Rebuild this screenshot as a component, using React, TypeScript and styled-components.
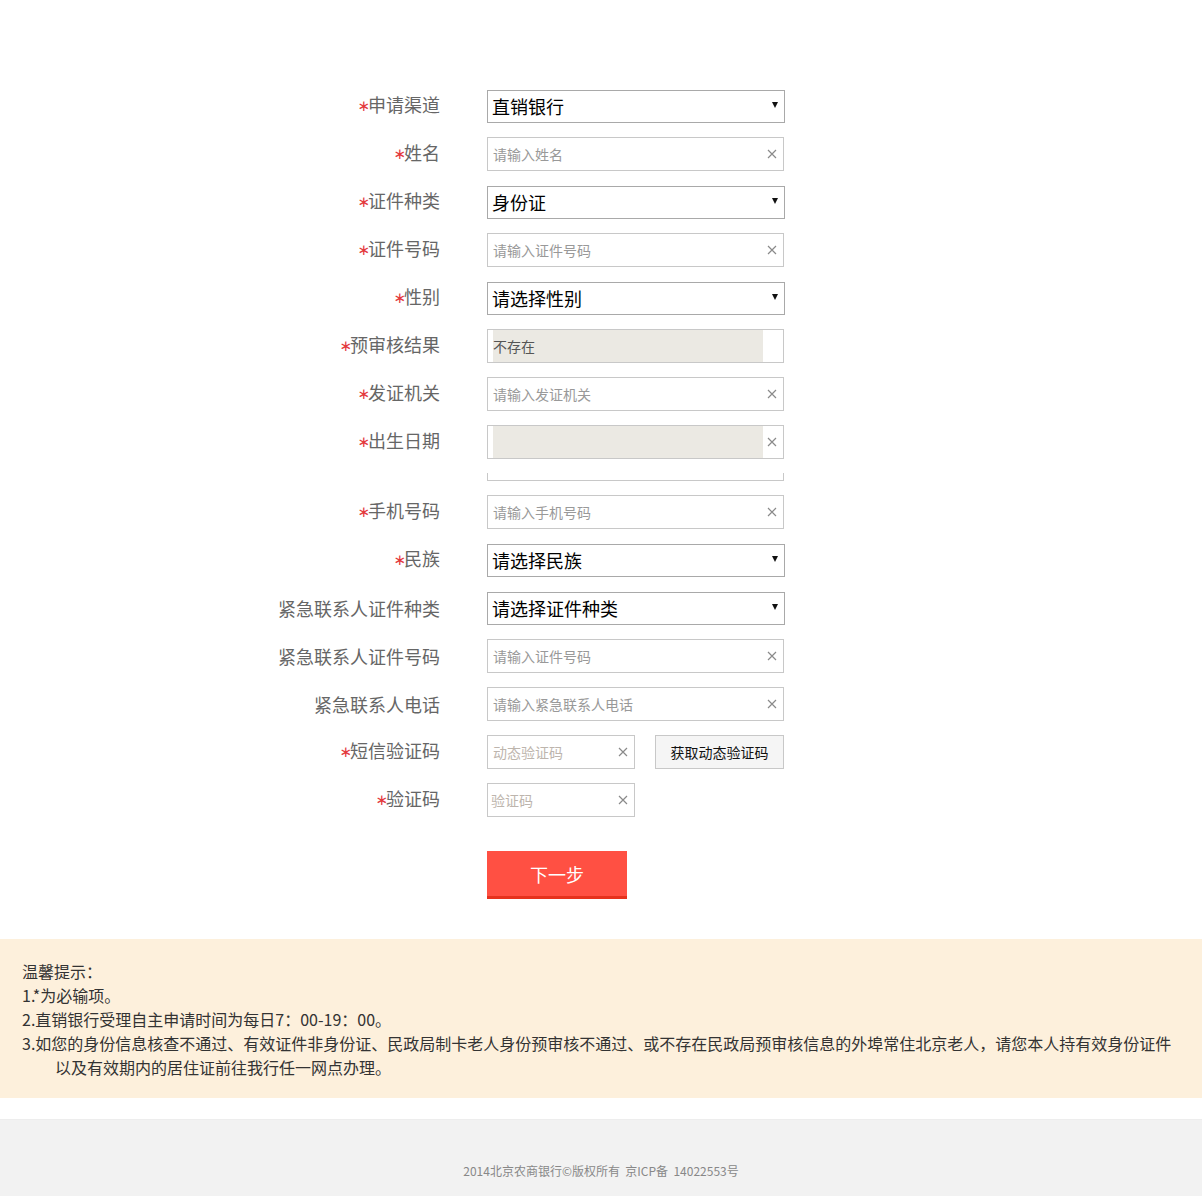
import * as React from 'react';
import styled, { createGlobalStyle } from 'styled-components';

const GlobalStyle = createGlobalStyle`
    html, body {
        margin: 0;
        padding: 0;
        background: #fff;
        font-family: "Noto Sans CJK SC", "Noto Sans", sans-serif;
    }
`;

const Page = styled.div`
    width: 1202px;
    min-height: 1196px;
    display: flex;
    flex-direction: column;
`;

const Form = styled.div`
    padding-top: 89px;
    display: flex;
    flex-direction: column;
`;

const Row = styled.div`
    display: grid;
    grid-template-columns: 440px auto;
    column-gap: 47px;
    align-items: center;
    height: 34px;
    margin-bottom: 14px;
`;

const ClippedRow = styled(Row)`
    height: 8px;
`;

const ClippedField = styled.div`
    height: 8px;
    overflow: hidden;
    display: flex;
    align-items: flex-end;
`;

const Label = styled.div`
    text-align: right;
    font-size: 18px;
    line-height: 24px;
    margin-top: -1px;
    color: #666;
    white-space: nowrap;
`;

const Star = styled.span`
    color: #e4393c;
    font-family: "DejaVu Sans", sans-serif;
    font-size: 15px;
    position: relative;
    top: -1px;
    margin-right: -2px;
`;

const Fields = styled.div`
    display: flex;
    align-items: center;
    gap: 20px;
`;

const SelectBox = styled.div`
    box-sizing: border-box;
    width: 298px;
    height: 33px;
    border: 1px solid #a9a9a9;
    display: flex;
    align-items: center;
    justify-content: space-between;
    padding: 0 6px 0 4px;
    font-size: 18px;
    color: #000;
    background: #fff;
    &::after {
        content: '';
        width: 0;
        height: 0;
        border-left: 3px solid transparent;
        border-right: 3px solid transparent;
        border-top: 6px solid #111;
        margin-top: -2px;
    }
`;

const TextField = styled.div<{ $short?: boolean }>`
    box-sizing: border-box;
    width: ${(p) => (p.$short ? '148px' : '297px')};
    height: 34px;
    border: 1px solid #c8c8c8;
    display: flex;
    align-items: center;
    padding: 0 6px 0 5px;
    background: #fff;
`;

const Input = styled.input<{ $light?: boolean }>`
    flex: 1;
    min-width: 0;
    border: none;
    outline: none;
    padding: 0;
    background: transparent;
    font-family: inherit;
    font-size: 14px;
    color: #333;
    &::placeholder {
        color: ${(p) => (p.$light ? '#bdb5ad' : '#999')};
    }
`;

const Filled = styled.div`
    align-self: stretch;
    width: 270px;
    background: #ebe9e3;
    display: flex;
    align-items: center;
    font-size: 14px;
    color: #555;
`;

const Spacer = styled.div`
    flex: 1;
`;

const CodeButton = styled.button`
    box-sizing: border-box;
    width: 129px;
    height: 34px;
    border: 1px solid #c8c8c8;
    background: #f5f5f5;
    font-family: inherit;
    font-size: 14px;
    color: #111;
    padding: 0;
    cursor: pointer;
`;

const NextButton = styled.button`
    box-sizing: border-box;
    margin: 20px 0 0 487px;
    width: 140px;
    height: 48px;
    border: none;
    border-bottom: 3px solid #e6321d;
    background: #ff5043;
    color: #fff;
    font-family: inherit;
    font-size: 18px;
    padding: 0;
    cursor: pointer;
`;

const Notice = styled.div`
    margin-top: 40px;
    background: #fdf0dc;
    padding: 20px 21px 19px 22px;
    font-size: 16px;
    line-height: 24px;
    color: #333;
`;

const NoticeLine = styled.div<{ $indent?: boolean }>`
    padding-left: ${(p) => (p.$indent ? '33px' : '0')};
    white-space: nowrap;
`;

const Footer = styled.div`
    margin-top: 21px;
    flex: 1;
    background: #f2f2f2;
    border-top: 1px solid #ededed;
    padding-top: 43px;
    text-align: center;
    font-size: 12px;
    line-height: 16px;
    color: #888;
    white-space: pre;
`;

const Clear = () => (
    <svg width="10" height="10" viewBox="0 0 10 10">
        <path d="M1 1L9 9M9 1L1 9" stroke="#8a8a8a" strokeWidth="1.2" />
    </svg>
);

const L: React.FC<{ req?: boolean; children: React.ReactNode }> = ({ req, children }) => (
    <Label>
        {req && <Star>∗</Star>}
        {children}
    </Label>
);

const TextRow: React.FC<{ label: string; req?: boolean; placeholder: string }> = ({ label, req, placeholder }) => (
    <Row>
        <L req={req}>{label}</L>
        <TextField>
            <Input placeholder={placeholder} />
            <Clear />
        </TextField>
    </Row>
);

const SelectRow: React.FC<{ label: string; req?: boolean; value: string }> = ({ label, req, value }) => (
    <Row>
        <L req={req}>{label}</L>
        <SelectBox>{value}</SelectBox>
    </Row>
);

export default function App() {
    return (
        <Page>
            <GlobalStyle />
            <Form>
                <SelectRow req label="申请渠道" value="直销银行" />
                <TextRow req label="姓名" placeholder="请输入姓名" />
                <SelectRow req label="证件种类" value="身份证" />
                <TextRow req label="证件号码" placeholder="请输入证件号码" />
                <SelectRow req label="性别" value="请选择性别" />
                <Row>
                    <L req>预审核结果</L>
                    <TextField>
                        <Filled>不存在</Filled>
                    </TextField>
                </Row>
                <TextRow req label="发证机关" placeholder="请输入发证机关" />
                <Row>
                    <L req>出生日期</L>
                    <TextField>
                        <Filled />
                        <Spacer />
                        <Clear />
                    </TextField>
                </Row>
                <ClippedRow>
                    <div />
                    <ClippedField>
                        <TextField />
                    </ClippedField>
                </ClippedRow>
                <TextRow req label="手机号码" placeholder="请输入手机号码" />
                <SelectRow req label="民族" value="请选择民族" />
                <SelectRow label="紧急联系人证件种类" value="请选择证件种类" />
                <TextRow label="紧急联系人证件号码" placeholder="请输入证件号码" />
                <TextRow label="紧急联系人电话" placeholder="请输入紧急联系人电话" />
                <Row>
                    <L req>短信验证码</L>
                    <Fields>
                        <TextField $short>
                            <Input $light placeholder="动态验证码" />
                            <Clear />
                        </TextField>
                        <CodeButton>获取动态验证码</CodeButton>
                    </Fields>
                </Row>
                <Row>
                    <L req>验证码</L>
                    <TextField $short style={{ paddingLeft: 3 }}>
                        <Input $light placeholder="验证码" />
                        <Clear />
                    </TextField>
                </Row>
            </Form>
            <div>
                <NextButton>下一步</NextButton>
            </div>
            <Notice>
                <NoticeLine>温馨提示：</NoticeLine>
                <NoticeLine>1.*为必输项。</NoticeLine>
                <NoticeLine>2.直销银行受理自主申请时间为每日7：00-19：00。</NoticeLine>
                <NoticeLine>
                    3.如您的身份信息核查不通过、有效证件非身份证、民政局制卡老人身份预审核不通过、或不存在民政局预审核信息的外埠常住北京老人，请您本人持有效身份证件
                </NoticeLine>
                <NoticeLine $indent>以及有效期内的居住证前往我行任一网点办理。</NoticeLine>
            </Notice>
            <Footer>2014北京农商银行©版权所有  京ICP备  14022553号</Footer>
        </Page>
    );
}
